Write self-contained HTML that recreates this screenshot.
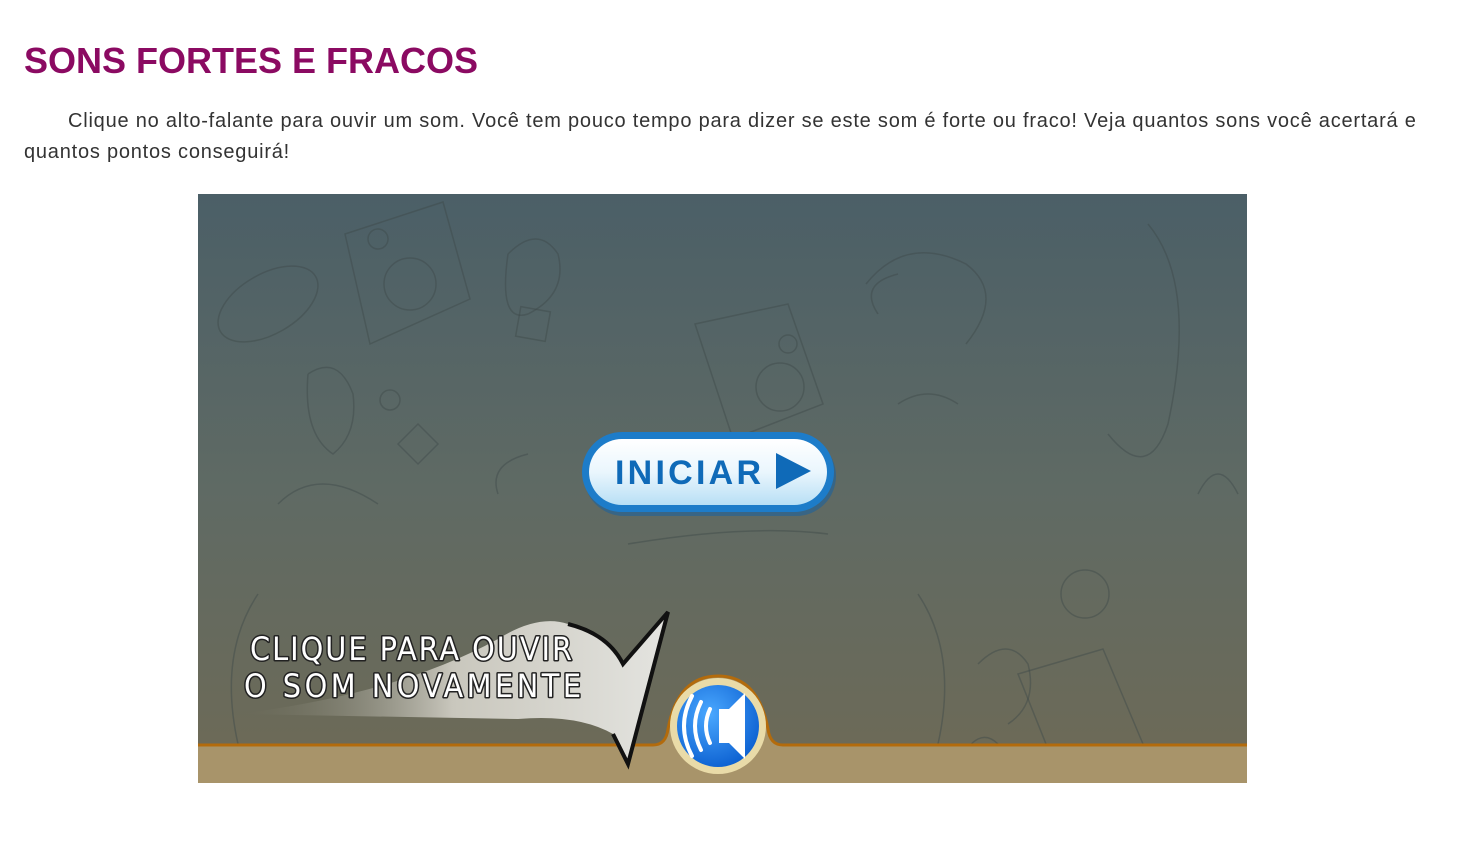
<!DOCTYPE html>
<html><head><meta charset="utf-8"><style>
html,body{margin:0;padding:0;background:#fff;width:1460px;height:850px;overflow:hidden}
h1{position:absolute;left:24px;top:38px;margin:0;font-family:"Liberation Sans",sans-serif;font-weight:bold;font-size:36px;color:#8b0a62;letter-spacing:0px;line-height:46px}
p{position:absolute;left:24px;top:106px;width:1412px;margin:0;font-family:"Liberation Sans",sans-serif;font-size:20px;line-height:31px;color:#333;text-indent:44px;letter-spacing:0.78px}
#g{position:absolute;left:198px;top:194px}
</style></head><body>
<h1>SONS FORTES E FRACOS</h1>
<p>Clique no alto-falante para ouvir um som. Você tem pouco tempo para dizer se este som é forte ou fraco! Veja quantos sons você acertará e quantos pontos conseguirá!</p>
<svg id="g" width="1049" height="589" viewBox="0 0 1049 589">
<defs>
<linearGradient id="bg" x1="0" y1="0" x2="0" y2="1">
<stop offset="0" stop-color="#4b5f67"/><stop offset="0.5" stop-color="#5f6a64"/><stop offset="1" stop-color="#6e6a56"/></linearGradient>
<linearGradient id="bt" x1="0" y1="0" x2="0" y2="1">
<stop offset="0" stop-color="#ffffff"/><stop offset="0.5" stop-color="#eaf6fd"/><stop offset="1" stop-color="#b8dff5"/></linearGradient>
<linearGradient id="ar" x1="0" y1="0" x2="1" y2="0">
<stop offset="0" stop-color="#6a6a5a" stop-opacity="0"/><stop offset="0.5" stop-color="#c9c7bd"/><stop offset="1" stop-color="#e4e4e0"/></linearGradient>
<radialGradient id="sp" cx="0.4" cy="0.35" r="0.7"><stop offset="0" stop-color="#4aa8ff"/><stop offset="1" stop-color="#0b5fd0"/></radialGradient>
</defs>
<rect width="1049" height="589" fill="url(#bg)"/>
<g fill="none" stroke="#3e4a4a" stroke-opacity="0.45" stroke-width="1.5">
<path d="M147 40 L245 8 L272 105 L172 150 Z"/><circle cx="212" cy="90" r="26"/><circle cx="180" cy="45" r="10"/>
<ellipse cx="70" cy="110" rx="55" ry="30" transform="rotate(-30 70 110)"/>
<path d="M310 60 q30 -30 50 0 q10 40 -30 60 q-30 10 -20 -60"/>
<rect x="320" y="115" width="30" height="30" transform="rotate(10 335 130)"/>
<path d="M497 130 L590 110 L625 210 L535 245 Z"/><circle cx="582" cy="193" r="24"/><circle cx="590" cy="150" r="9"/>
<path d="M668 90 q40 -50 100 -20 q40 30 0 80 M680 120 q-20 -30 20 -40"/>
<path d="M820 480 L905 455 L945 550 L860 580 Z"/>
<circle cx="887" cy="400" r="24"/>
<path d="M110 180 q30 -20 45 20 q5 40 -20 60 q-30 -20 -25 -80"/>
<path d="M200 250 l20 -20 l20 20 l-20 20 Z"/><circle cx="192" cy="206" r="10"/>
<path d="M330 260 q-40 10 -30 40 M430 350 q120 -20 200 -10 M700 210 q30 -20 60 0 M80 310 q40 -40 100 0"/>
<path d="M950 30 q50 60 20 200 q-20 60 -60 10"/>
<path d="M60 400 q-40 60 -20 150 M720 400 q40 60 20 150"/>
<path d="M780 470 q30 -30 50 0 q10 40 -20 60"/>
<path d="M1000 300 q20 -40 40 0"/>
<path d="M760 570 q20 -40 40 -20 q10 20 -20 20"/>
</g>
<rect x="0" y="551" width="1049" height="38" fill="#a8946a"/>
<path d="M0 551 L455 551 Q468 551 470 535 Q480 482 520 482 Q560 482 570 535 Q572 551 585 551 L1049 551" fill="#a8946a" stroke="#b36b0c" stroke-width="3"/>
<path d="M40 520 Q200 500 300 445 Q340 420 370 430 Q410 440 425 470 L470 418 L430 570 L415 540 Q380 520 320 525 Z" fill="url(#ar)"/>
<path d="M370 430 Q410 440 425 470 L470 418 L430 570 L415 540" fill="none" stroke="#111" stroke-width="4"/>
<circle cx="520" cy="532" r="48" fill="#e9dba8"/>
<circle cx="520" cy="532" r="41" fill="url(#sp)"/>
<path d="M521 515 h10 l16 -16 v66 l-16 -16 h-10 Z" fill="#fff"/>
<path d="M512 515 q-8 17 0 34 M503 508 q-12 24 0 48 M494 502 q-16 30 0 60" fill="none" stroke="#fff" stroke-width="4" stroke-linecap="round"/>
<g font-family="'DejaVu Sans Condensed','Liberation Sans Narrow',sans-serif" font-size="32" fill="#fff" stroke="#222" stroke-width="3" paint-order="stroke" stroke-linejoin="round">
<text x="52" y="466" textLength="322">CLIQUE PARA OUVIR</text>
<text x="46" y="503" textLength="337">O SOM NOVAMENTE</text>
</g>
<rect x="384" y="238" width="252" height="80" rx="40" fill="#0f5fa8" opacity="0.5" transform="translate(2 4)"/>
<rect x="384" y="238" width="252" height="80" rx="40" fill="#1d7cc9"/>
<rect x="391" y="245" width="238" height="66" rx="33" fill="url(#bt)"/>
<text x="417" y="290" font-family="'Liberation Sans',sans-serif" font-weight="bold" font-size="34" fill="#0f6ab8" textLength="146">INICIAR</text>
<path d="M578 259 L613 277 L578 295 Z" fill="#0f6ab8"/>
</svg>
</body></html>
